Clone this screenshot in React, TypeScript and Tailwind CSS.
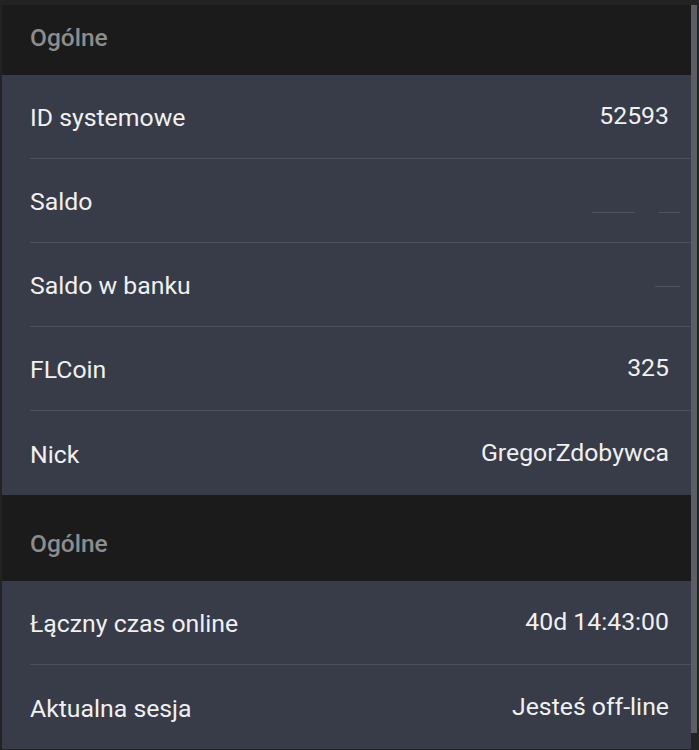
const general = [
  { label: "ID systemowe", value: "52593" },
  { label: "Saldo", value: "", redacted: "saldo" },
  { label: "Saldo w banku", value: "", redacted: "bank" },
  { label: "FLCoin", value: "325" },
  { label: "Nick", value: "GregorZdobywca" },
]

const time = [
  { label: "Łączny czas online", value: "40d 14:43:00" },
  { label: "Aktualna sesja", value: "Jesteś off-line" },
]

function Header({ title, className }: { title: string; className: string }) {
  return (
    <div className={`flex items-center bg-[#1b1b1b] pl-[28px] ${className}`}>
      <span className="text-[24.5px] font-medium text-[#8d8d8d]">{title}</span>
    </div>
  )
}

function Row({
  label,
  value,
  redacted,
  last,
}: {
  label: string
  value: string
  redacted?: string
  last?: boolean
}) {
  return (
    <div className="pl-[28px]">
      <div
        className={`flex h-[84px] items-center justify-between pr-[22px] pt-[3px] ${
          last ? "" : "border-b border-[#4b505b]"
        }`}
      >
        <span className="text-[24.8px] text-[#f0f0f0]">{label}</span>
        {redacted === "saldo" && (
          <span className="-mr-[11px] flex items-center gap-[24px] pt-[20px]">
            <span className="h-[1px] w-[43px] bg-[#4e535e]" />
            <span className="h-[1px] w-[21px] bg-[#4e535e]" />
          </span>
        )}
        {redacted === "bank" && <span className="-mr-[11px] h-[1px] w-[25px] bg-[#4e535e]" />}
        {value && <span className="pb-[4px] text-[24.8px] text-[#f0f0f0]">{value}</span>}
      </div>
    </div>
  )
}

export default function App() {
  return (
    <div
      className="flex h-[750px] w-[699px] overflow-hidden bg-[#232323]"
      style={{ fontFamily: "Roboto, 'Noto Sans', sans-serif" }}
    >
      <div className="flex flex-1 flex-col pl-[2px] pt-[5px]">
        <Header title="Ogólne" className="h-[70px] pb-[3px]" />
        <div className="bg-[#373c48]">
          {general.map((r, i) => (
            <Row key={r.label} {...r} last={i === general.length - 1} />
          ))}
        </div>
        <Header title="Ogólne" className="h-[86px] pt-[12px]" />
        <div className="bg-[#373c48]">
          {time.map((r, i) => (
            <Row key={r.label} {...r} last={i === time.length - 1} />
          ))}
        </div>
      </div>
      <div className="flex w-[8px] flex-col pt-[5px]">
        <div className="h-[728px] w-[6px] bg-[#5b5e65]" />
      </div>
    </div>
  )
}
